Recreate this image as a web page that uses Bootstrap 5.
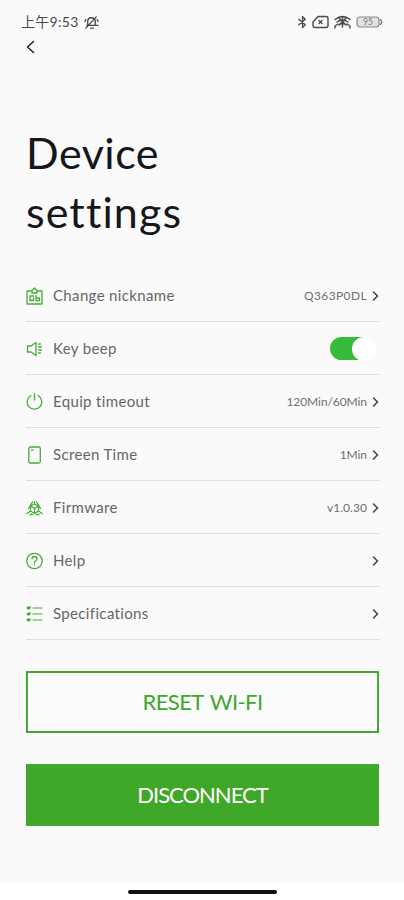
<!DOCTYPE html>
<html lang="en">
<head>
<meta charset="utf-8">
<meta name="viewport" content="width=device-width, initial-scale=1">
<title>Device settings</title>
<link href="https://cdn.jsdelivr.net/npm/bootstrap@5.3.0/dist/css/bootstrap.min.css" rel="stylesheet">
<style>
  body { font-family: Lato, "Noto Sans CJK SC", sans-serif; font-variant-ligatures: none; background: #fff; color: #16171a; }
  .screen { height: 900px; max-width: 404px; overflow: hidden; }
  .page { height: 884px; background: #fafafa; padding: 0 24px 0 26px; }
  .status { height: 33px; padding-top: 11px; margin-left: -5px; margin-right: -3px; color: #4a4a4a; }
  .clock { font-size: 14px; line-height: 22px; letter-spacing: .3px; }
  .status svg, .setting svg, .back svg { display: block; flex: none; fill: none; stroke-linecap: round; stroke-linejoin: round; }
  .status svg { stroke: #484848; stroke-width: 1.4; }
  .indicators { height: 22px; }
  .back { height: 28px; padding: 7px 0 0; }
  .title { font-size: 43px; line-height: 59px; font-weight: 400; letter-spacing: .5px; padding-top: 62px; height: 208px; }
  .title .second { letter-spacing: 1.1px; }
  .setting { height: 53px; border: 0; border-bottom: 1px solid #dedede !important; background: transparent; padding: 1px 0 0; color: #666; }
  .setting .glyph { stroke: #47ac38; stroke-width: 1.3; margin-right: 10px; }
  .setting .arrow { stroke: #444; stroke-width: 1.6; margin-left: 4px; }
  .label { font-size: 15px; line-height: 20px; letter-spacing: .35px; padding-bottom: 1px; }
  .value { font-size: 12px; line-height: 20px; color: #707070; letter-spacing: -.08px; }
  .value.serial { letter-spacing: .38px; }
  .value.version { letter-spacing: .05px; }
  .toggle { width: 46px; height: 23px; margin-right: 4px; border-radius: 12px; background: linear-gradient(90deg, #37bb3b 34px, transparent 34px); }
  .knob { width: 24px; height: 24px; background: #fff; }
  .action { width: 353px; height: 62px; font-size: 22px; line-height: 1; border-radius: 0; border: 2px solid #42a832; padding-top: 6px; }
  .reset { color: #3fa72d; margin-top: 31px; background: #fbfbfb; letter-spacing: -.6px; word-spacing: 2px; }
  .disconnect { color: #fff; background: #40a829; margin-top: 31px; letter-spacing: -1px; }
  .homebar { width: 149px; height: 4px; border-radius: 2px; background: #111; margin-top: 6px; }
</style>
</head>
<body>
<div class="screen">
  <main class="page">
    <header class="status d-flex align-items-start justify-content-between">
      <div class="d-flex align-items-center gap-1">
        <span class="clock">上午9:53</span>
        <svg width="17" height="17" viewBox="0 0 18 18"><path d="M4 12h9M5 11V8q0-4 4-4 3 0 4 3v5h3M8 15h3M3 15 14 3M2 8l1-2M15 6l1 2"/></svg>
      </div>
      <div class="indicators d-flex align-items-center gap-1">
        <svg width="11" height="14" viewBox="0 0 12 14"><path d="m2 4 7 6-3 3V1l3 3-7 6"/></svg>
        <svg width="17" height="14" viewBox="0 0 17 14"><path d="M6 1.500h8q2 0 2 2v7q0 2-2 2H3q-2 0-2-2V7zM7 5.500l3 3m0-3-3 3"/></svg>
        <svg width="19" height="14" viewBox="0 0 19 14"><path d="M2 4.500q7.500-6 15 0M4 7q5.500-4 11 0M6.500 9.500q3-2 6 0M9.500 2v10M2 13v-2l3-2M17 13v-2l-3-2M6 3l7 7M13 3l-7 7"/></svg>
        <svg width="27" height="14" viewBox="0 0 27 14"><rect x="1" y="2" width="22" height="10" rx="3" fill="#e2e2e2" stroke="#888" stroke-width="1.200"/><path d="m24.500 4.500 1.500 2.500-1.500 2.500" stroke="#777"/><text x="12" y="10" text-anchor="middle" font-size="8.500" fill="#777" stroke="none">95</text></svg>
      </div>
    </header>
    <div class="back"><svg width="10" height="14" viewBox="0 0 10 14" stroke="#222" stroke-width="1.500"><path d="M7.500 1.500 1.500 7l6 5.500"/></svg></div>
    <h1 class="title m-0">Device<br><span class="second">settings</span></h1>

    <div class="list-group list-group-flush">
      <div class="setting list-group-item d-flex align-items-center">
        <svg class="glyph" width="17" height="18" viewBox="0 0 17 18"><path d="M5.500 4H1v13h15V4h-4.500M6 6V3.500L8.500 1 11 3.500V6zM7.500 9H4v4.500h3.500V11M10 8.500v5M10 11h3.500v2.500H10"/></svg>
        <span class="label me-auto">Change nickname</span><span class="value serial">Q363P0DL</span>
        <svg class="arrow" width="9" height="12" viewBox="0 0 9 12"><path d="m2.500 2 4 4-4 4"/></svg>
      </div>
      <div class="setting list-group-item d-flex align-items-center">
        <svg class="glyph" width="17" height="18" viewBox="0 0 17 18"><path d="M1.500 6H5l5-3.500v13L5 12H1.500zM12.500 4h2M12.500 7h3M12.500 10h3M12.500 13h2"/></svg>
        <span class="label me-auto">Key beep</span><span class="toggle d-flex justify-content-end align-items-center"><span class="knob rounded-circle"></span></span>
      </div>
      <div class="setting list-group-item d-flex align-items-center">
        <svg class="glyph" width="17" height="18" viewBox="0 0 17 18"><path d="M5 2.500a7.300 7.300 0 1 0 7 0M8.500 1v6"/></svg>
        <span class="label me-auto">Equip timeout</span><span class="value">120Min/60Min</span>
        <svg class="arrow" width="9" height="12" viewBox="0 0 9 12"><path d="m2.500 2 4 4-4 4"/></svg>
      </div>
      <div class="setting list-group-item d-flex align-items-center">
        <svg class="glyph" width="17" height="18" viewBox="0 0 17 18"><rect x="2.800" y="1" width="11.500" height="16" rx="1.500"/><path d="M5.500 4h1.500"/></svg>
        <span class="label me-auto">Screen Time</span><span class="value">1Min</span>
        <svg class="arrow" width="9" height="12" viewBox="0 0 9 12"><path d="m2.500 2 4 4-4 4"/></svg>
      </div>
      <div class="setting list-group-item d-flex align-items-center">
        <svg class="glyph" width="17" height="18" viewBox="0 0 17 18"><path d="m8.500 5 4 2v5l-4 2.500-4-2.500V7zM4.500 7l4 2.500 4-2.500M8.500 9.500v5M8.500 5V2.500M4.500 12 1 14.500M12.500 12l3.500 2.500M6.500 3 2.500 9.500M10.500 3l4 6.500M4 15.500h2.500M10.500 15.500H13"/></svg>
        <span class="label me-auto">Firmware</span><span class="value version">v1.0.30</span>
        <svg class="arrow" width="9" height="12" viewBox="0 0 9 12"><path d="m2.500 2 4 4-4 4"/></svg>
      </div>
      <div class="setting list-group-item d-flex align-items-center">
        <svg class="glyph" width="17" height="18" viewBox="0 0 17 18"><circle cx="8.500" cy="9" r="7.700"/><path d="M6 7q0-2.500 2.500-2.500T11 7q0 1-1.300 1.800-1.200.7-1.200 2M8.500 13v.2"/></svg>
        <span class="label me-auto">Help</span>
        <svg class="arrow" width="9" height="12" viewBox="0 0 9 12"><path d="m2.500 2 4 4-4 4"/></svg>
      </div>
      <div class="setting list-group-item d-flex align-items-center">
        <svg class="glyph" width="17" height="18" viewBox="0 0 17 18"><path d="M7 3h9M7 9h9M7 15h9" stroke-width="1.200"/><path d="M2 3h1M2 9h1M2 15h1" stroke-width="2.800"/><path d="m3 3 1.500-1M3 9l1.500-1M3 15l1.500-1"/></svg>
        <span class="label me-auto">Specifications</span>
        <svg class="arrow" width="9" height="12" viewBox="0 0 9 12"><path d="m2.500 2 4 4-4 4"/></svg>
      </div>
    </div>

    <button class="btn action reset d-block">RESET WI-FI</button>
    <button class="btn action disconnect d-block">DISCONNECT</button>
  </main>
  <div class="homebar mx-auto"></div>
</div>
<script src="https://cdn.jsdelivr.net/npm/bootstrap@5.3.0/dist/js/bootstrap.bundle.min.js"></script>
</body>
</html>
